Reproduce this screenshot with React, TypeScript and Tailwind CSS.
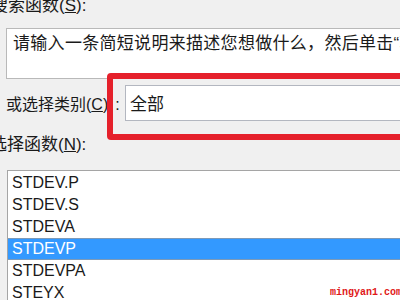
import React from "react";

const cjk = '"Liberation Sans", "Noto Sans CJK SC", sans-serif';

export default function App() {
  const items = ["STDEV.P", "STDEV.S", "STDEVA", "STDEVP", "STDEVPA", "STEYX", "SUBTOTAL"];
  return (
    <div
      className="relative w-[400px] h-[300px] overflow-hidden bg-[#f0f0f0] text-[#1a1a1a]"
      style={{ fontFamily: cjk }}
    >
      <div className="flex flex-col">
        <div className="mt-[-3px] ml-[-9px] h-[17px] text-[17px] leading-[17px] whitespace-nowrap">
          搜索函数(<span className="underline">S</span>):
        </div>
        <div className="mt-[14px] ml-[6px] w-[420px] h-[51px] border border-[#b9b9b9] bg-white pl-[6px] pt-[6px] text-[17px] leading-[17px] tracking-[0.3px] whitespace-nowrap">
          请输入一条简短说明来描述您想做什么，然后单击“转到”
        </div>
        <div className="mt-[6px] flex items-center">
          <div className="ml-[6px] w-[119px] shrink-0 pt-[3px] text-[16px] leading-[17px] whitespace-nowrap">
            或选择类别(<span className="underline">C</span>)<span className="ml-[7px]">:</span>
          </div>
          <div className="w-[300px] shrink-0 h-[36px] border border-[#b3b7c0] bg-white pl-[4px] flex items-center pt-[3px] text-[17px] leading-[17px]">
            全部
          </div>
        </div>
        <div className="mt-[15px] ml-[-10px] h-[17px] text-[17px] leading-[17px] whitespace-nowrap">
          选择函数(<span className="underline">N</span>):
        </div>
        <div className="mt-[17px] ml-[7px] w-[420px] h-[160px] border-t border-l border-[#a5a5a5] bg-white pt-[1px]">
          {items.map((t) => {
            const sel = t === "STDEVP";
            return (
              <div
                key={t}
                className={
                  sel
                    ? "h-[22px] pl-[4px] flex items-center bg-[#3399ff] text-white border-y border-[#7d9ab8] text-[16px]"
                    : "h-[22px] pl-[4px] flex items-center text-[16px]"
                }
              >
                {t}
              </div>
            );
          })}
        </div>
      </div>
      <div className="absolute left-[107px] top-[73px] w-[320px] h-[67px] border-[6px] border-[#e5202b] rounded-[4px]" />
      <div
        className="absolute left-[330px] top-[287px] text-[10px] leading-[12px] text-[#e01818] font-bold"
        style={{ fontFamily: '"Liberation Mono", monospace' }}
      >
        mingyan1.com
      </div>
    </div>
  );
}
